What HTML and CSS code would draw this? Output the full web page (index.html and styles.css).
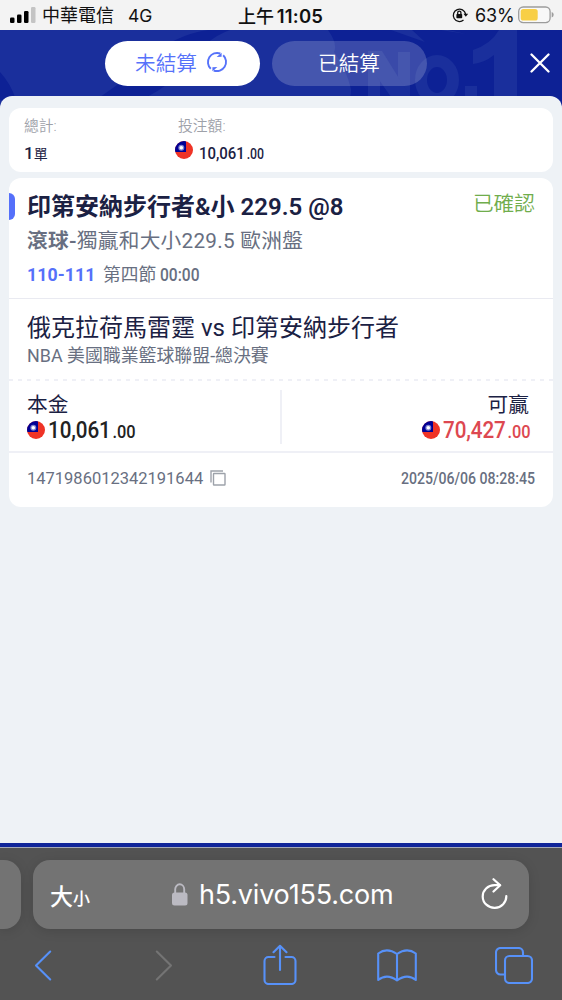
FILE: index.html
```html
<!DOCTYPE html>
<html lang="zh-Hant">
<head>
<meta charset="utf-8">
<title>注單</title>
<link rel="stylesheet" href="styles.css">
</head>
<body>
<svg class="defs" width="0" height="0">
  <defs>
    <clipPath id="disc"><circle cx="9" cy="9" r="9"/></clipPath>
    <symbol id="flag" viewBox="0 0 18 18">
      <g clip-path="url(#disc)">
        <path fill="#ef3326" d="M0 0h18v18H0z"/>
        <path fill="#000095" d="M0 0h11v11H0z"/>
        <circle cx="6.3" cy="6.8" r="3" fill="#7d80d0"/>
        <circle cx="6.3" cy="6.8" r="1.8" fill="#fff"/>
      </g>
    </symbol>
  </defs>
</svg>
<div class="phone">
  <div class="status">
    <svg class="signal" width="26" height="16" viewBox="0 0 26 16">
      <rect x="0" y="10.5" width="4.5" height="5.5" rx="1.3"/><rect x="7" y="7.5" width="4.5" height="8.5" rx="1.3"/><rect x="14" y="4" width="4.5" height="12" rx="1.3"/><rect x="21" y="0" width="4.5" height="16" rx="1.3" fill="#c4c4c4"/>
    </svg>
    <span class="carrier">中華電信</span><span class="net">4G</span>
    <span class="clock">上午 <b>11:05</b></span>
    <svg class="lock-rot" width="16" height="16" viewBox="0 0 16 16" fill="none" stroke="#111" stroke-width="1.3">
      <path d="M11.5 13.1A6.2 6.2 0 1 1 13.6 7"/><path d="M11.5 6.8h4.6l-2.3 3z" fill="#111" stroke="none"/><rect x="4.4" y="7" width="5.8" height="4.2" rx=".7" fill="#111" stroke="none"/><path d="M5.7 7V5.7a1.6 1.6 0 0 1 3.2 0V7"/>
    </svg>
    <span class="percent">63%</span>
    <svg class="battery" width="37" height="18" viewBox="0 0 37 18">
      <rect x=".7" y="1" width="31.4" height="15.6" rx="4.5" fill="#f8f8f8" stroke="#9c9c9c" stroke-width="1.3"/><rect x="2.7" y="3" width="17" height="11.6" rx="2.6" fill="#f8cf46"/><path d="M33.7 6q2 .7 2 2.8t-2 2.8z" fill="#9c9c9c"/>
    </svg>
  </div>

  <div class="app">
    <svg class="decor" width="562" height="80" viewBox="0 0 562 80">
      <path fill="#0d2195" d="M0 42Q11 54 16 70H0zM208 0H562V80H80Q118 57 148 29Q174 5 208 0z"/>
      <path fill="#1a2f9c" d="M230 0h98q10 14 6 22q12 16 17 37q1 15-16 21H102q53-8 77-38Q206 8 230 0zM391 0l34 12-13-12zM441 0l25 4-18-4z"/>
      <g fill="none" stroke="#1a2f9c">
        <path stroke-width="12" d="M374 80V22M404 80V22"/>
        <ellipse cx="437" cy="50" rx="16" ry="19" stroke-width="12"/>
      </g>
      <path fill="#1a2f9c" d="M368 21h14l28 45v14h-10l-32-46zM465 56h12v13h-12zM517 0v80h-23V25q-10 8-21 9V20q18-6 26-20z"/>
    </svg>
    <header class="header">
      <button class="pill pill-active"><span>未結算</span>
        <svg width="22" height="22" viewBox="0 0 22 22" fill="none" stroke="#5672fa" stroke-width="1.9">
          <path d="M4.800 17.800A9.200 9.200 0 0 1 14.300 2.500M17.200 4.200A9.200 9.200 0 0 1 7.700 19.500"/><path d="M10.600 6L15.600 1.800V5.800zM11.400 16L6.400 20.200V16.200z" fill="#5672fa" stroke="none"/>
        </svg>
      </button>
      <button class="pill"><span>已結算</span></button>
      <svg class="close" width="20" height="20" viewBox="0 0 20 20"><path d="M1.5 1.5l17 17M18.500 1.500l-17 17" stroke="#fff" stroke-width="2.300" stroke-linecap="round"/></svg>
    </header>

    <main class="content">
      <section class="card summary">
        <div class="sum-count"><div class="label">總計:</div><div class="value"><b>1</b>單</div></div>
        <div class="sum-stake"><div class="label">投注額:</div><div class="value stake-value"><svg class="flag"><use href="#flag"/></svg><b class="narrow sum-money">10,061<small>.00</small></b></div></div>
      </section>

      <section class="card bet">
        <div class="pick">
          <span class="mark"></span>
          <div class="pick-main">
            <h1><span>印第安納步行者&amp;小 229.5 @8</span></h1>
            <div class="market"><b>滾球-</b>獨贏和大小229.5 歐洲盤</div>
            <div class="score"><b>110-111</b><span>第四節</span><em class="narrow">00:00</em></div>
          </div>
          <div class="confirmed">已確認</div>
        </div>
        <div class="match">
          <h2>俄克拉荷馬雷霆 vs 印第安納步行者</h2>
          <div class="league">NBA 美國職業籃球聯盟-總決賽</div>
        </div>
        <div class="dash"></div>
        <div class="amounts">
          <div class="amount"><div class="amount-label">本金</div><div class="money"><svg class="flag"><use href="#flag"/></svg><b class="narrow">10,061<small>.00</small></b></div></div>
          <div class="amount amount-win"><div class="amount-label">可贏</div><div class="money"><svg class="flag"><use href="#flag"/></svg><b class="narrow">70,427<small>.00</small></b></div></div>
        </div>
        <footer class="meta">
          <span class="id">1471986012342191644</span>
          <svg width="16" height="16" viewBox="0 0 16 16" fill="none" stroke="#9da2aa" stroke-width="1.4"><path d="M1 12.500V1h12"/><rect x="3.500" y="3.500" width="11.500" height="11.500" rx=".5"/></svg>
          <time class="narrow">2025/06/06 08:28:45</time>
        </footer>
      </section>
    </main>
  </div>

  <div class="browser">
    <div class="tabs">
      <div class="tab-prev"></div>
      <div class="address">
        <span class="aa">大<small>小</small></span>
        <svg class="lock" width="16" height="23" viewBox="0 0 16 23"><rect y="9.500" width="15.500" height="13" rx="2.500" fill="#bbbac2"/><path d="M3.200 10V6.300a4.500 5 0 0 1 9 0V10" fill="none" stroke="#bbbac2" stroke-width="1.900"/></svg>
        <span class="url">h5.vivo155.com</span>
        <svg class="reload" width="27" height="31" viewBox="0 0 27 31" fill="none" stroke="#fff" stroke-width="2.200" stroke-linecap="round" stroke-linejoin="round"><path d="M25.300 18A11.800 11.300 0 1 1 13.500 7.200h5.500"/><path d="M12.500 1.200l6.700 6-6.700 6.300"/></svg>
      </div>
    </div>
    <nav class="tools">
      <svg width="18" height="31" viewBox="0 0 18 31"><path d="M16.200 1.500L2 15.500l14.200 14"/></svg>
      <svg class="off" width="18" height="31" viewBox="0 0 18 31"><path d="M1.800 1.500L16 15.500l-14.200 14"/></svg>
      <svg width="34" height="41" viewBox="0 0 34 41"><path d="M11.500 13H5.500a4 4 0 0 0-4 4v19a4 4 0 0 0 4 4h23a4 4 0 0 0 4-4V17a4 4 0 0 0-4-4h-6M17 26V2M10.500 8.200L17 1.800l6.500 6.400"/></svg>
      <svg width="40" height="33" viewBox="0 0 40 33"><path d="M20 5Q10-2 1.200 4.500V31Q10 24 20 31.500Q30 24 38.800 31V4.500Q30-2 20 5zV31.500"/></svg>
      <svg width="38" height="37" viewBox="0 0 38 37"><rect x="10" y="9" width="27" height="27" rx="4.500"/><path d="M10 27.500H5.500a4.500 4.500 0 0 1-4.500-4.500V5.500A4.500 4.500 0 0 1 5.500 1h18A4.500 4.500 0 0 1 28 5.500V9"/></svg>
    </nav>
  </div>
</div>
</body>
</html>
```
FILE: styles.css
```css
* { box-sizing: border-box; }
body { margin: 0; font-family: Roboto, "Noto Sans CJK TC", sans-serif; color: #1b2143; }
svg { display: block; flex: none; }
b, h1, h2 { font-weight: 500; }
.defs { position: absolute; }
.phone { width: 562px; height: 1000px; overflow: hidden; display: flex; flex-direction: column; }
.phone span, .phone div { white-space: nowrap; }

.status { height: 30px; flex: none; background: #f3f3f3; display: flex; align-items: center; font: 18px/30px Inter, "Noto Sans CJK TC", sans-serif; color: #111; }
.status span { padding-top: 2px; }
.signal { margin: 0 6px 0 10px; }
.carrier { width: 86px; }
.net { width: 110px; font-size: 17.500px; }
.clock { width: 214px; font-weight: 500; font-size: 18px; }
.clock b { font-weight: 600; margin-left: -2px; font-size: 18.500px; letter-spacing: .2px; }
.lock-rot { margin-right: 7px; }
.percent { width: 43px; font-size: 18px; letter-spacing: -.1px; }

.app { height: 818px; flex: none; background: #1a2f9c; position: relative; display: flex; flex-direction: column; border-bottom: 1px solid #a4a8b7; }
.app::after { content: ""; height: 4px; flex: none; background: #10259a; }
.decor { position: absolute; left: 0; top: 0; }
.header { position: relative; height: 66px; flex: none; display: flex; align-items: center; gap: 12px; padding-left: 105px; }
.pill { width: 155px; height: 45px; border: 0; border-radius: 23px; padding: 0 1px 2px 0; background: rgba(255,255,255,.19); color: #fff; display: flex; justify-content: center; align-items: center; gap: 9px; font: 350 20.600px/30px "Noto Sans CJK TC", sans-serif; }
.pill-active { background: #fff; color: #5672fa; padding-right: 2px; }
.pill-active svg { margin-top: -1px; }
.close { margin-left: 91px; }

.content { position: relative; height: 747px; background: #eef2f6; border-radius: 12px 12px 0 0; padding: 12px 9px; display: flex; flex-direction: column; gap: 6px; }
.card { background: #fff; border-radius: 12px; flex: none; }
.summary { height: 64px; padding: 5px 15px; display: flex; }
.sum-count { width: 154px; }
.label { font-size: 14.800px; line-height: 26px; color: #9ea1a9; font-weight: 350; }
.value { font-size: 14px; line-height: 28px; }
.value b { font-size: 17px; }
.stake-value { display: flex; align-items: center; margin-left: -3px; }
.stake-value .flag { margin: -7px 6px 0 0; }
.flag { width: 18px; height: 18px; }
.narrow { display: inline-block; transform-origin: 0 50%; transform: scaleX(.88); }

.bet { height: 329px; display: flex; flex-direction: column; }
.pick { height: 121px; display: flex; border-bottom: 1px solid #e9eaf1; }
.mark { width: 6px; height: 27px; margin: 15px 12px 0 0; background: #5570fa; border-radius: 0 6px 6px 0; }
.pick-main { flex: 1; padding-top: 12px; }
h1 { margin: 0; font-size: 24px; line-height: 34px; font-weight: 600; }
.market { font-size: 20.700px; line-height: 34px; color: #686f81; letter-spacing: .27px; }
.market b { font-weight: 600; }
.score { display: flex; font-size: 17.700px; line-height: 34px; color: #686f81; }
.score b { width: 76px; color: #5570fa; font-weight: 700; letter-spacing: .1px; }
.score span { width: 57px; }
.score em { font-style: normal; font-weight: 500; }
.confirmed { margin: 9px 18px 0 0; font: 350 20.700px/30px "Noto Sans CJK TC", sans-serif; color: #70ad4c; }
.match { height: 80px; padding: 13px 18px 0; }
h2 { margin: 0; font-size: 24px; line-height: 33px; font-weight: 400; }
.league { font-size: 17.900px; line-height: 22px; color: #686f81; }
.dash { height: 2px; background: repeating-linear-gradient(90deg, #eff0f6 0 4px, transparent 4px 9px); }
.amounts { height: 72px; padding: 10px 23px 7px 18px; display: flex; border-bottom: 2px solid #eff0f6; }
.amount { flex: 1; margin-top: -1px; }
.amount:first-child { flex: 0 0 255px; border-right: 2px solid #eff0f6; }
.amount-label { font: 20.700px/26px "Noto Sans CJK TC", sans-serif; }
.money { display: flex; align-items: center; height: 27px; gap: 3px; font-size: 24px; color: #222; }
.money b { width: 88px; transform: scaleX(.86); letter-spacing: -.1px; }
.money small { font-size: 19px; margin-left: 2px; }
.sum-money small { font-size: 14px; margin-left: 2px; }
.amount-win { display: flex; flex-direction: column; align-items: flex-end; }
.amount-win .amount-label { margin-right: 1px; }
.amount-win .money { color: #dd4850; margin-right: -1px; }
.meta { height: 50px; padding: 0 18px; display: flex; align-items: center; color: #686f81; font-size: 16.500px; }
.id { width: 183px; }
.meta time { width: 134px; margin-left: auto; font-weight: 500; white-space: nowrap; font-size: 16px; }

.browser { flex: 1; background: #535353; padding-top: 12px; }
.tabs { display: flex; gap: 12px; height: 69px; }
.tab-prev { width: 21px; background: #737373; border-radius: 0 17px 17px 0; box-shadow: 0 2px 12px rgba(0,0,0,.13); }
.address { width: 496px; background: #737373; border-radius: 17px; display: flex; align-items: center; color: #fff; font-family: Inter, "Noto Sans CJK TC", sans-serif; box-shadow: 0 2px 12px rgba(0,0,0,.13); }
.aa { width: 122px; margin-left: 17px; font-size: 23px; font-weight: 500; }
.aa small { font-size: 17px; }
.url { width: 282px; margin-left: 11px; font-size: 27px; letter-spacing: -.2px; }
.reload { margin-top: -3px; }
.tools { display: flex; height: 71px; padding-left: 34px; }
.tools svg { margin-top: 21px; fill: none; stroke: #5791f8; stroke-width: 2.100; stroke-linecap: round; stroke-linejoin: round; }
.tools .off { margin-left: 103px; stroke: #747474; }
.tools svg:nth-child(3) { margin-left: 90px; margin-top: 15px; }
.tools svg:nth-child(4) { margin-left: 80px; margin-top: 20px; }
.tools svg:nth-child(5) { margin-left: 78px; margin-top: 18px; }
```
